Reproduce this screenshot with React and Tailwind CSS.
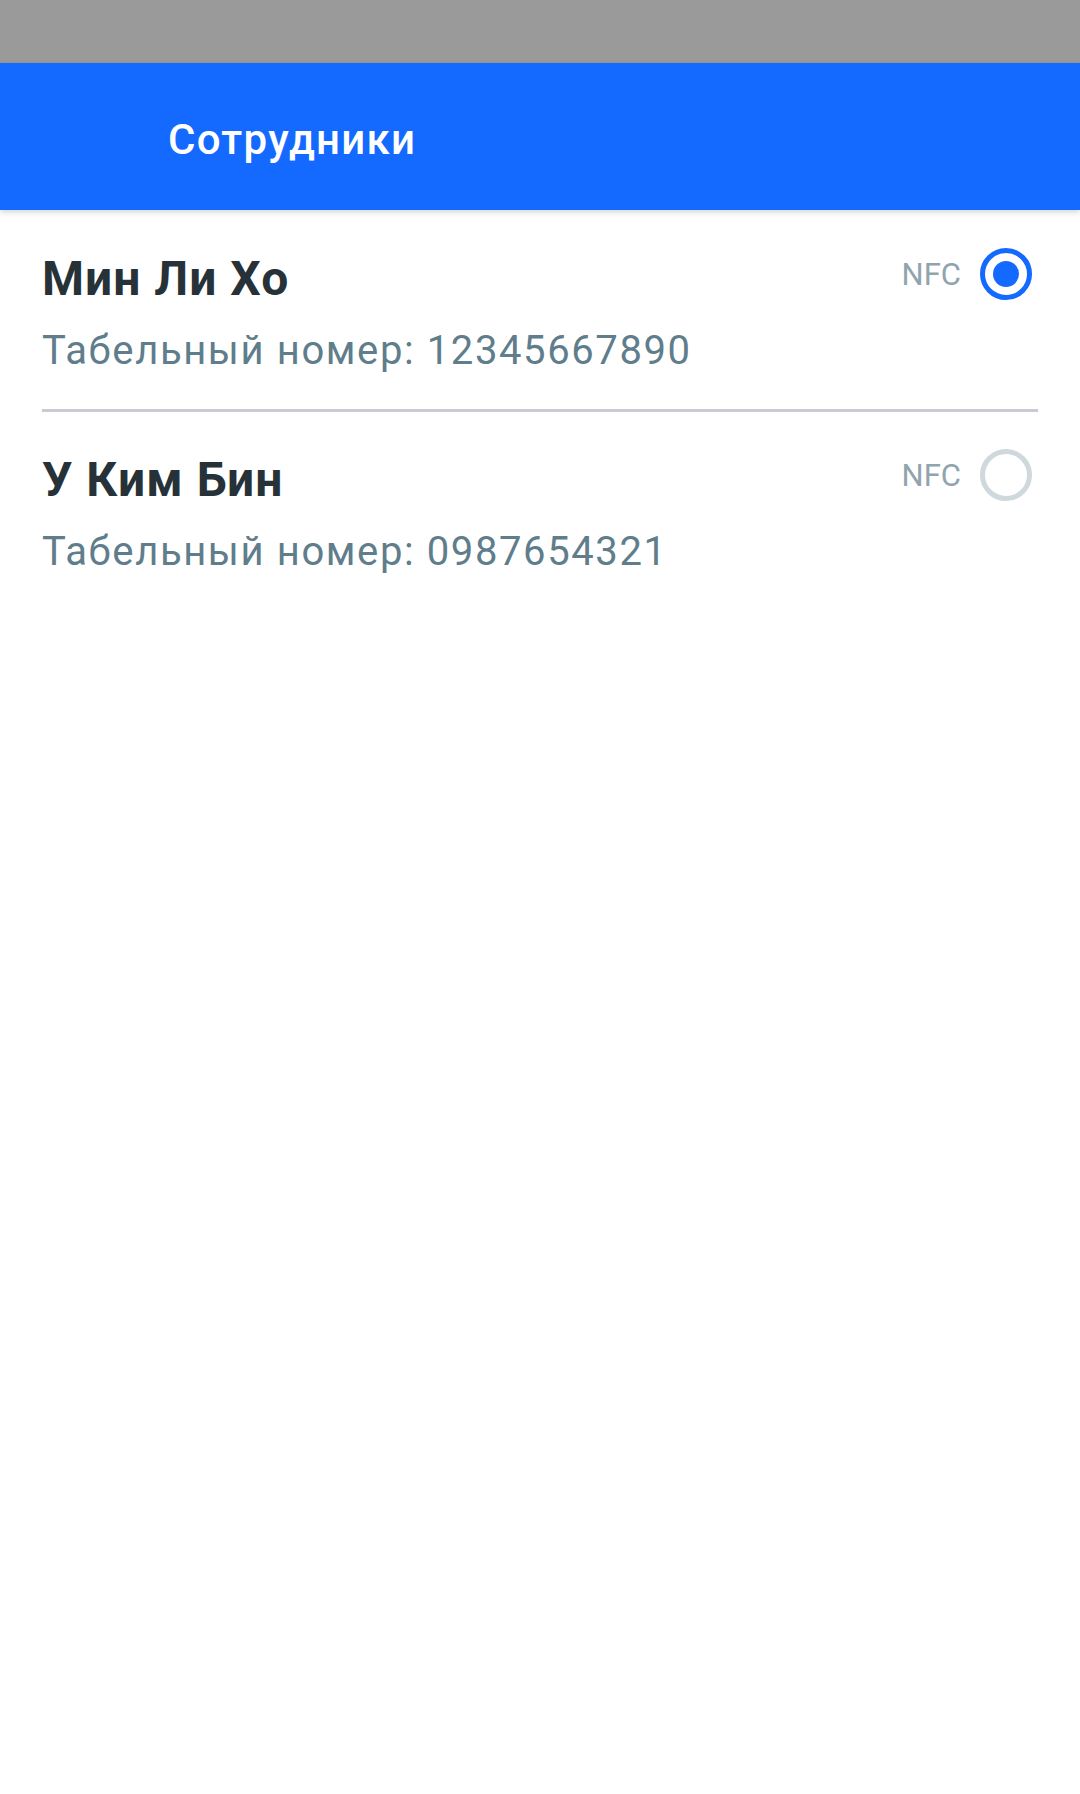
import React, { useState } from "react";

const employees = [
  { id: 1, name: "Мин Ли Хо", number: "12345667890" },
  { id: 2, name: "У Ким Бин", number: "0987654321" },
];

const Radio = ({ checked }) => (
  <div
    className={`w-[52px] h-[52px] rounded-full border-[5px] flex items-center justify-center ${
      checked ? "border-[#1469ff]" : "border-[#cfd8dc]"
    }`}
  >
    {checked && <div className="w-[26px] h-[26px] rounded-full bg-[#1469ff]" />}
  </div>
);

const App = () => {
  const [selected, setSelected] = useState(1);

  return (
    <div className="w-[1080px] h-[1794px] bg-white font-['Roboto',sans-serif] overflow-hidden">
      {/* status bar */}
      <div className="h-[63px] bg-[#9a9a9a]" />

      {/* header */}
      <div className="h-[147px] bg-[#1469ff] flex items-center pl-[168px] pt-[5px] shadow-[0_2px_6px_rgba(0,0,0,0.18)] relative">
        <h1 className="text-white text-[42px] font-medium tracking-[1.3px]">Сотрудники</h1>
      </div>

      {/* employee list */}
      <div className="px-[42px]">
        {employees.map((emp, i) => (
          <div key={emp.id}>
            {i > 0 && <div className="h-[3px] bg-[#c8cbd3]" />}
            <div
              className={`flex justify-between items-start pb-[34px] ${
                i === 0 ? "pt-[41px]" : "pt-[40px]"
              }`}
              onClick={() => setSelected(emp.id)}
            >
              <div>
                <div className="text-[48px] leading-[56px] font-bold text-[#263238] tracking-[1px]">
                  {emp.name}
                </div>
                <div className="mt-[20px] text-[40px] leading-[48px] text-[#607d8b] tracking-[1.6px]">
                  Табельный номер: {emp.number}
                </div>
              </div>
              <div className="flex items-center gap-[19px] mt-[-3px] mr-[6px]">
                <span className="text-[31px] text-[#90a4ae] translate-y-[1px]">NFC</span>
                <Radio checked={selected === emp.id} />
              </div>
            </div>
          </div>
        ))}
      </div>
    </div>
  );
};

export default App;
